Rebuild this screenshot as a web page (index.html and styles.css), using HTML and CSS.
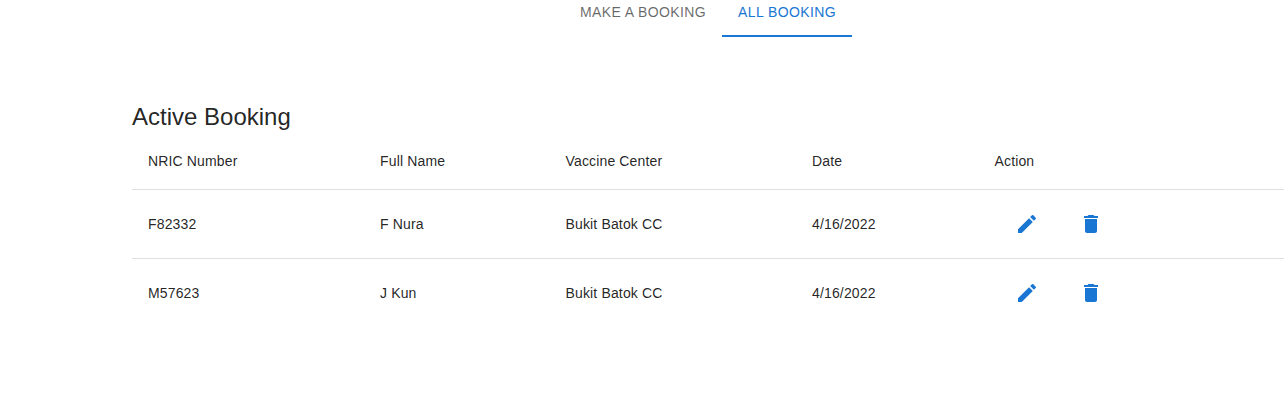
FILE: index.html
```html
<!DOCTYPE html>
<html lang="en">
<head>
<meta charset="utf-8">
<title>All Booking</title>
<link rel="stylesheet" href="styles.css">
</head>
<body>
<svg class="sprite" aria-hidden="true">
<symbol id="edit" viewBox="0 0 24 24"><path d="M3 17.25V21h3.75L17.81 9.94l-3.75-3.75L3 17.25zM20.71 7.04c.39-.39.39-1.02 0-1.41l-2.34-2.34a.9959.9959 0 0 0-1.41 0l-1.83 1.83 3.75 3.75 1.83-1.83z"/></symbol>
<symbol id="delete" viewBox="0 0 24 24"><path d="M6 19c0 1.1.9 2 2 2h8c1.1 0 2-.9 2-2V7H6v12zM19 4h-3.5l-1-1h-5l-1 1H5v2h14V4z"/></symbol>
</svg>
<nav class="tabs">
<button class="tab">MAKE A BOOKING</button>
<button class="tab tab-selected">ALL BOOKING</button>
</nav>
<main class="content">
<h1 class="title">Active Booking</h1>
<div class="table">
<div class="row head"><span>NRIC Number</span><span>Full Name</span><span>Vaccine Center</span><span>Date</span><span>Action</span></div>
<div class="row"><span>F82332</span><span>F Nura</span><span>Bukit Batok CC</span><span>4/16/2022</span><div class="actions"><button class="action" aria-label="Edit"><svg class="icon"><use href="#edit"/></svg></button><button class="action" aria-label="Delete"><svg class="icon"><use href="#delete"/></svg></button></div></div>
<div class="row"><span>M57623</span><span>J Kun</span><span>Bukit Batok CC</span><span>4/16/2022</span><div class="actions"><button class="action" aria-label="Edit"><svg class="icon"><use href="#edit"/></svg></button><button class="action" aria-label="Delete"><svg class="icon"><use href="#delete"/></svg></button></div></div>
</div>
</main>
</body>
</html>
```
FILE: styles.css
```css
* { box-sizing: border-box; }
body {
  margin: 0;
  overflow: hidden;
  background: #fff;
  color: rgba(0, 0, 0, .87);
  font-family: "Liberation Sans", Arial, sans-serif;
}
.sprite { display: none; }
.tabs {
  display: flex;
  justify-content: center;
  height: 37px;
  padding-left: 128px;
  width: 1288px;
}
.tab {
  height: 37px;
  padding: 0 16px 10px;
  border: 0;
  border-bottom: 2px solid transparent;
  background: none;
  color: rgba(0, 0, 0, .6);
  font: 14px/17.5px "Liberation Sans", Arial, sans-serif;
  letter-spacing: .39998px;
}
.tab-selected { color: #1976d2; border-color: #1976d2; }
.content { width: 1152px; margin: 64px 0 0 132px; }
.title {
  margin: 0;
  height: 32px;
  font-size: 24px;
  line-height: 32px;
  font-weight: 400;
}
.row {
  display: grid;
  grid-template-columns: 232px 185.5px 246.5px 182.5px 1fr;
  align-items: center;
  height: 69px;
  font-size: 14px;
  line-height: 20px;
  letter-spacing: .14994px;
}
.row > span { padding-left: 16px; }
.row + .row { border-top: 1px solid #e0e0e0; }
.head { height: 56px; }
.actions { display: flex; padding-left: 16px; }
.action {
  width: 64px;
  height: 36px;
  padding: 6px 8px;
  display: flex;
  justify-content: center;
  align-items: center;
  border: 0;
  background: none;
  color: #1976d2;
}
.icon { width: 24px; height: 24px; fill: currentColor; }
```
